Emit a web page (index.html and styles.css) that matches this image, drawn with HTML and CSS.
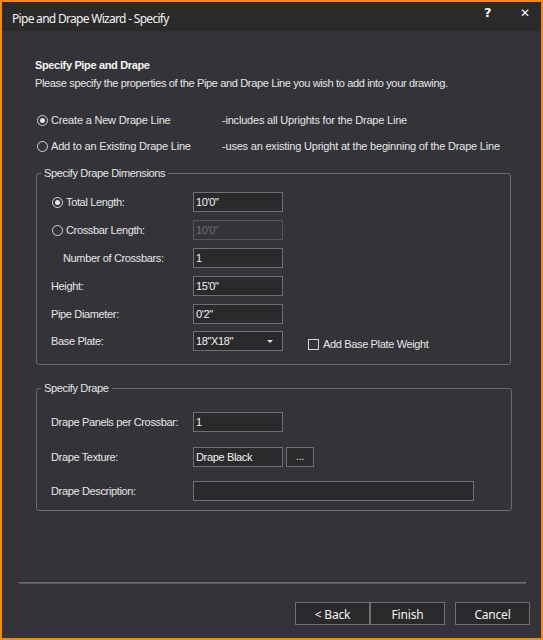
FILE: index.html
```html
<!DOCTYPE html>
<html>
<head>
<meta charset="utf-8">
<link rel="stylesheet" href="styles.css">
</head>
<body>
<div class="window">
  <div class="titlebar">
    <span class="title">Pipe and Drape Wizard - Specify</span>
    <span class="tb-btn help">?</span>
    <span class="tb-btn close">✕</span>
  </div>
  <div class="header">
    <div class="heading">Specify Pipe and Drape</div>
    <div class="subtitle">Please specify the properties of the Pipe and Drape Line you wish to add into your drawing.</div>
  </div>
  <div class="mode">
    <div class="mode-row">
      <span class="radio checked"></span><span class="mode-label">Create a New Drape Line</span><span class="mode-desc">-includes all Uprights for the Drape Line</span>
    </div>
    <div class="mode-row second">
      <span class="radio"></span><span class="mode-label">Add to an Existing Drape Line</span><span class="mode-desc">-uses an existing Upright at the beginning of the Drape Line</span>
    </div>
  </div>

  <div class="group dims">
    <div class="legend">Specify Drape Dimensions</div>
    <div class="row r-radio">
      <span class="radio checked"></span><span class="label lr">Total Length:</span><span class="input">10'0"</span>
    </div>
    <div class="row r-radio">
      <span class="radio"></span><span class="label lr">Crossbar Length:</span><span class="input disabled">10'0"</span>
    </div>
    <div class="row r-indent">
      <span class="label li">Number of Crossbars:</span><span class="input">1</span>
    </div>
    <div class="row">
      <span class="label">Height:</span><span class="input">15'0"</span>
    </div>
    <div class="row">
      <span class="label">Pipe Diameter:</span><span class="input">0'2"</span>
    </div>
    <div class="row last">
      <span class="label">Base Plate:</span><span class="input select">18"X18"<span class="arrow"></span></span>
      <span class="checkbox"></span><span class="check-label">Add Base Plate Weight</span>
    </div>
  </div>

  <div class="group drape">
    <div class="legend">Specify Drape</div>
    <div class="row">
      <span class="label">Drape Panels per Crossbar:</span><span class="input">1</span>
    </div>
    <div class="row g2b">
      <span class="label">Drape Texture:</span><span class="input">Drape Black</span><span class="dots">...</span>
    </div>
    <div class="row g2c">
      <span class="label">Drape Description:</span><span class="input wide"></span>
    </div>
  </div>

  <div class="separator"></div>

  <div class="buttons">
    <span class="btn">&lt; Back</span><span class="btn">Finish</span><span class="btn cancel">Cancel</span>
  </div>
</div>
</body>
</html>
```

FILE: styles.css
```css
* { box-sizing: border-box; }
html, body { margin: 0; padding: 0; background: #343438; }
.window {
  width: 543px;
  height: 640px;
  border: 2px solid #f7890c;
  background: #343438;
  font-family: "Liberation Sans", Arial, sans-serif;
  font-size: 11px;
  letter-spacing: -0.35px;
  color: #e6e6e6;
  overflow: hidden;
}
.titlebar {
  height: 29px;
  background: #2a2a2d;
  position: relative;
}
.title {
  position: absolute;
  left: 10px;
  top: 9px;
  font-family: "Noto Sans", "Open Sans", sans-serif;
  font-size: 12px;
  letter-spacing: -0.7px;
  line-height: 16px;
  color: #f2f2f2;
}
.tb-btn {
  position: absolute;
  top: 3px;
  font-family: "DejaVu Sans", sans-serif;
  font-weight: bold;
  color: #f2f2f2;
  line-height: 16px;
  letter-spacing: 0;
}
.help { left: 482px; font-size: 13px; }
.close { left: 518px; font-size: 12px; }

.header { margin-top: 27px; padding-left: 33px; }
.heading { font-weight: bold; font-size: 11px; line-height: 14px; color: #f4f4f4; }
.subtitle { margin-top: 4px; line-height: 14px; }

.mode { margin-top: 22px; padding-left: 35px; letter-spacing: -0.2px; }
.mode-row { display: flex; align-items: center; height: 16px; }
.mode-row.second { margin-top: 10px; }
.mode-label { margin-left: 3px; width: 171px; }

.radio {
  width: 11px; height: 11px;
  border: 1px solid #d6d6d6;
  border-radius: 50%;
  display: inline-flex;
  align-items: center;
  justify-content: center;
  flex: none;
}
.radio.checked::after {
  content: "";
  width: 5px; height: 5px;
  border-radius: 50%;
  background: #e8e8e8;
}

.group {
  position: relative;
  margin-left: 34px;
  border: 1px solid #6c6c70;
  border-radius: 3px;
}
.legend {
  position: absolute;
  top: -8px;
  left: 4px;
  padding: 0 3px;
  line-height: 14px;
  background: #343438;
}
.dims { margin-top: 19px; width: 475px; padding: 18px 0 13px 0; }
.drape { margin-top: 23px; width: 476px; padding: 23px 0 9px 0; }

.row { display: flex; align-items: center; height: 20px; margin-top: 8px; padding-left: 14px; }
.legend + .row { margin-top: 0; }
.row.last { margin-top: 7px; }
.drape .g2b { margin-top: 15px; }
.drape .g2c { margin-top: 14px; }
.label { width: 142px; flex: none; }
.r-radio { padding-left: 15px; }
.lr { margin-left: 3px; width: 127px; }
.r-indent { padding-left: 26px; }
.li { width: 130px; }

.input {
  width: 90px;
  height: 20px;
  border: 1px solid #707074;
  background: #2a2a2d;
  color: #f2f2f2;
  padding-left: 2px;
  line-height: 18px;
  flex: none;
  position: relative;
}
.input.disabled { border-color: #56565a; color: #6e6e72; background: #343438; }
.input.wide { width: 281px; }
.arrow {
  position: absolute;
  right: 9px;
  top: 8px;
  width: 0; height: 0;
  border-left: 3px solid transparent;
  border-right: 3px solid transparent;
  border-top: 3px solid #e0e0e0;
}
.checkbox {
  width: 11px; height: 11px;
  border: 1px solid #d6d6d6;
  margin-left: 25px;
  margin-top: 6px;
  flex: none;
}
.check-label { margin-left: 4px; margin-top: 6px; }
.dots {
  width: 28px; height: 20px;
  margin-left: 3px;
  border: 1px solid #707074;
  background: #2a2a2d;
  text-align: center;
  line-height: 16px;
  flex: none;
}

.separator {
  margin-top: 71px;
  margin-left: 17px;
  width: 507px;
  height: 2px;
  border-top: 1px solid #6c6c70;
  border-bottom: 1px solid #58585c;
}
.buttons { margin-top: 18px; padding-left: 293px; display: flex; }
.btn {
  width: 75px;
  height: 23px;
  border: 1px solid #707074;
  background: #2a2a2d;
  font-family: "Noto Sans", "Open Sans", sans-serif;
  font-size: 12px;
  letter-spacing: -0.2px;
  line-height: 19px;
  padding-top: 2px;
  text-align: center;
  color: #f2f2f2;
}
.btn.cancel { margin-left: 10px; }
```
